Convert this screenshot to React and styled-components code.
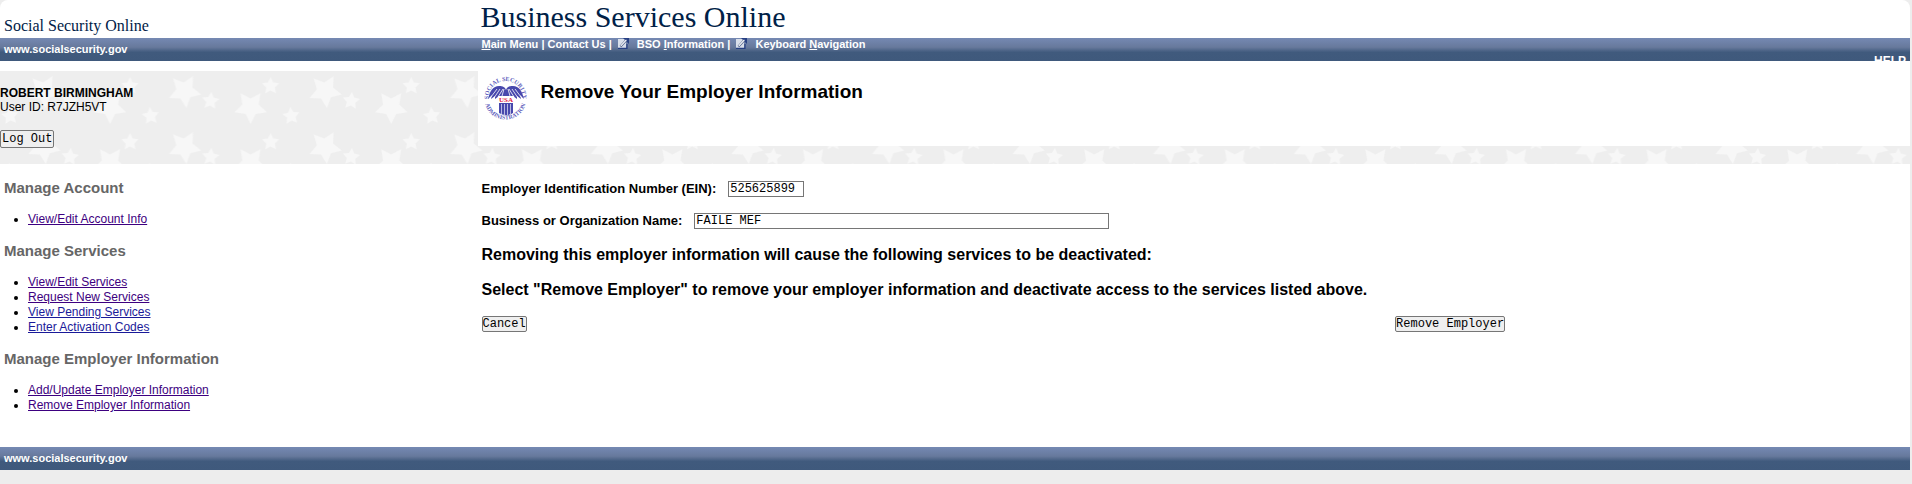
import React, { useState } from 'react'
import styled, { createGlobalStyle } from 'styled-components'

const starPath = (cx, cy, r, turn) => {
  const points = []
  for (let i = 0; i < 10; i++) {
    const radius = i % 2 ? r * 0.5 : r
    const angle = (turn + i * 36) * Math.PI / 180
    points.push(`${(cx + radius * Math.sin(angle)).toFixed(1)} ${(cy - radius * Math.cos(angle)).toFixed(1)}`)
  }
  return `M${points.join('L')}Z`
}

const stars = [
  starPath(44, 20, 17, 174),
  starPath(70, 30, 9, 5),
  starPath(110, 36, 17, 180),
  starPath(130, 15, 9, 0),
  starPath(10, 45, 9, -6)
].join('')

// five repeats of the star pattern in one tile
const starTile = `url("data:image/svg+xml,${encodeURIComponent(
  `<svg xmlns="http://www.w3.org/2000/svg" width="703" height="56"><pattern id="s" width="140.6" height="56" patternUnits="userSpaceOnUse"><path fill="#f7f7f7" d="${stars}"/></pattern><rect width="703" height="56" fill="url(#s)"/></svg>`
)}")`

const GlobalStyle = createGlobalStyle`
  * {
    box-sizing: border-box;
  }
  body {
    margin: 0;
    background: #ededed;
    font-family: 'Liberation Sans', Arial, sans-serif;
    font-size: 12px;
    line-height: 14px;
    color: #000;
  }
`

const Page = styled.div`
  margin-right: 2px;
  background: #fff;
  border-radius: 8px 8px 0 0;
`

const Columns = styled.div`
  display: grid;
  grid-template-columns: 1fr 3fr;
`

const Header = styled(Columns)`
  height: 38px;
  color: #002147;
  font-family: Georgia, 'Liberation Serif', serif;
`

const SiteName = styled.div`
  padding: 16px 4px 0;
  font-size: 16px;
  line-height: 20px;
`

const AppName = styled.div`
  padding: 0 3px;
  font-size: 30px;
  line-height: 34px;
`

const Bar = styled(Columns)`
  height: 23px;
  overflow: hidden;
  background: linear-gradient(#7589b3 0%, #67799c 40%, #405a7d 62%, #3f597c 100%);
  color: #fff;
  font-size: 11px;
  font-weight: bold;
`

const SiteLink = styled.a`
  padding: 4px;
  color: #fff;
  text-decoration: none;
`

const NavArea = styled.div`
  display: flex;
  flex-direction: column;
  padding: 0 4px;
`

const Nav = styled.nav`
  height: 16px;
  flex: none;
  line-height: 13px;
  white-space: pre;

  a {
    color: #fff;
    text-decoration: none;
  }
  svg {
    margin: 0 8px 0 3px;
    vertical-align: -1px;
  }
`

const HelpLink = styled.a`
  align-self: flex-end;
  color: #fff;
  font-size: 12px;
  line-height: 14px;
  text-decoration: none;
`

const Band = styled(Columns)`
  height: 93px;
  margin-top: 10px;
  background: #eee ${starTile};
`

const User = styled.div`
  padding-top: 15px;

  form {
    margin-top: 16px;
  }
`

const Title = styled.div`
  display: flex;
  gap: 14px;
  height: 75px;
  padding: 5px 6px;
  background: #fff;

  h1 {
    margin: 4px 0 0;
    font-size: 19px;
    line-height: 24px;
  }
`

const Button = styled.button`
  height: ${props => props.$large ? '18px' : '16px'};
  padding: ${props => props.$large ? '0 1px' : '0'};
  border: 1px solid #767676;
  border-radius: 2px;
  background: #efefef;
  color: #000;
  font-family: 'Liberation Mono', 'Courier New', monospace;
  font-size: 12px;
  line-height: 14px;
`

const Menu = styled.aside`
  padding: 15px 4px 19px;

  h2 {
    margin: 0;
    color: #666;
    font-size: 15px;
    line-height: 18px;
  }
  ul {
    margin: 15px 0;
    padding-left: 24px;
  }
  li {
    line-height: 15px;
  }
`

const MenuLink = styled.a`
  color: ${props => props.$visited ? '#3d0080' : '#1a1a99'};
`

const Main = styled.main`
  padding: 15px 1px 0 4px;
`

const Field = styled.div`
  display: flex;
  align-items: center;
  gap: 12px;
  height: 20px;
  margin-bottom: 12px;

  label {
    font-size: 13px;
    font-weight: bold;
    line-height: 18px;
  }
  input {
    height: 16px;
    width: ${props => props.$wide ? '415px' : '76px'};
    padding: 0 1px;
    border: 1px solid #767676;
    font-family: 'Liberation Mono', 'Courier New', monospace;
    font-size: 12px;
  }
`

const Notice = styled.p`
  margin: 0 0 15px;
  font-size: 16px;
  font-weight: bold;
  line-height: 20px;
`

const Actions = styled.div`
  display: grid;
  grid-template-columns: 16fr 9fr;
  justify-items: start;
  padding-top: 1px;
`

const Notices = styled.div`
  padding-top: 2px;
`

const menuGroups = [
  { title: 'Manage Account', links: [['View/Edit Account Info', true]] },
  {
    title: 'Manage Services',
    links: [
      ['View/Edit Services', true],
      ['Request New Services', true],
      ['View Pending Services', false],
      ['Enter Activation Codes', false]
    ]
  },
  {
    title: 'Manage Employer Information',
    links: [
      ['Add/Update Employer Information', true],
      ['Remove Employer Information', true]
    ]
  }
]

const WindowIcon = () => (
  <svg width='11' height='11' viewBox='0 0 11 11' aria-hidden='true'>
    <path d='M0 1h8v9H0z' fill='#d9dfea' />
    <path d='M0 10.3h9V6' fill='none' stroke='#263f83' strokeWidth='1.2' />
    <path d='M5 0h6v6z' fill='#263f83' />
    <path d='M2.5 8.5l5.5-6' stroke='#55668f' strokeWidth='2.4' />
    <path d='M2.8 7.8l5.6-6' stroke='#fff' strokeWidth='1.2' />
  </svg>
)

const Seal = () => (
  <svg width='43' height='45' viewBox='0 0 43 45' aria-hidden='true'>
    <defs>
      <path id='top' d='M5.1 26.4A17 17 0 1 1 37.9 26.4' />
      <path id='bottom' d='M1 24a20.5 19.5 0 0 0 41 0' />
    </defs>
    <g fill='#6262bd' fontFamily='Liberation Serif, serif' fontSize='6' fontWeight='bold'>
      <text><textPath href='#top' startOffset='50%' textAnchor='middle'>SOCIAL SECURITY</textPath></text>
      <text><textPath href='#bottom' startOffset='50%' textAnchor='middle'>ADMINISTRATION</textPath></text>
    </g>
    <path d='M4 23C6 15 9 10 15 10c4 0 6 1 7 4 1-3 3-4 7-4 6 0 9 5 11 13l-4-4 1 4-4-3v3l-4-3-3 2H18l-3-2-4 3v-3l-4 3 1-4z' fill='#4848ad' />
    <path d='M7 21l6-8M10 22l6-9M14 21l5-8M18 20l2-7M37 21l-6-8M34 22l-6-9M30 21l-5-8M26 20l-2-7' stroke='#fff' strokeWidth='.8' />
    <path d='M15 27h14v10q-3 2-7 2t-7-2z' fill='#4848ad' />
    <path d='M17.5 28v10M20.5 28v11M23.5 28v11M26.5 28v10' stroke='#c5c5e8' strokeWidth='.9' />
    <path d='M14 20h16v7H14z' fill='#fff' />
    <text x='22' y='26' fill='#df2149' fontFamily='Liberation Serif, serif' fontSize='7' fontWeight='bold' textAnchor='middle'>USA</text>
  </svg>
)

const App = () => {
  const [ein, setEin] = useState('525625899')
  const [business, setBusiness] = useState('FAILE MEF')

  const handleSubmit = (e) => {
    e.preventDefault()
  }

  return (
    <>
      <GlobalStyle />
      <Page>
        <Header as='header'>
          <SiteName>Social Security Online</SiteName>
          <AppName>Business Services Online</AppName>
        </Header>
        <Bar>
          <SiteLink href='#home'>www.socialsecurity.gov</SiteLink>
          <NavArea>
            <Nav>
              <a href='#main'><u>M</u>ain Menu</a>{' | '}
              <a href='#contact'>Contact Us</a>{' | '}
              <a href='#bso'><WindowIcon />BSO <u>I</u>nformation</a>{' | '}
              <a href='#keyboard'><WindowIcon />Keyboard <u>N</u>avigation</a>
            </Nav>
            <HelpLink href='#help'>HELP</HelpLink>
          </NavArea>
        </Bar>
        <Band>
          <User>
            <b>ROBERT BIRMINGHAM</b>
            <div>User ID: R7JZH5VT</div>
            <form onSubmit={handleSubmit}>
              <Button type='submit' $large>Log Out</Button>
            </form>
          </User>
          <Title>
            <Seal />
            <h1>Remove Your Employer Information</h1>
          </Title>
        </Band>
        <Columns>
          <Menu>
            {menuGroups.map(group => (
              <section key={group.title}>
                <h2>{group.title}</h2>
                <ul>
                  {group.links.map(([label, visited]) => (
                    <li key={label}>
                      <MenuLink href='#menu' $visited={visited}>{label}</MenuLink>
                    </li>
                  ))}
                </ul>
              </section>
            ))}
          </Menu>
          <Main>
            <form onSubmit={handleSubmit}>
              <Field>
                <label htmlFor='ein'>Employer Identification Number (EIN):</label>
                <input id='ein' value={ein} onChange={(e) => setEin(e.target.value)} />
              </Field>
              <Field $wide>
                <label htmlFor='business'>Business or Organization Name:</label>
                <input id='business' value={business} onChange={(e) => setBusiness(e.target.value)} />
              </Field>
              <Notices>
                <Notice>Removing this employer information will cause the following services to be deactivated:</Notice>
                <Notice>Select "Remove Employer" to remove your employer information and deactivate access to the services listed above.</Notice>
              </Notices>
              <Actions>
                <Button type='button'>Cancel</Button>
                <Button type='submit'>Remove Employer</Button>
              </Actions>
            </form>
          </Main>
        </Columns>
        <Bar as='footer'>
          <SiteLink href='#home'>www.socialsecurity.gov</SiteLink>
        </Bar>
      </Page>
    </>
  )
}

export default App
